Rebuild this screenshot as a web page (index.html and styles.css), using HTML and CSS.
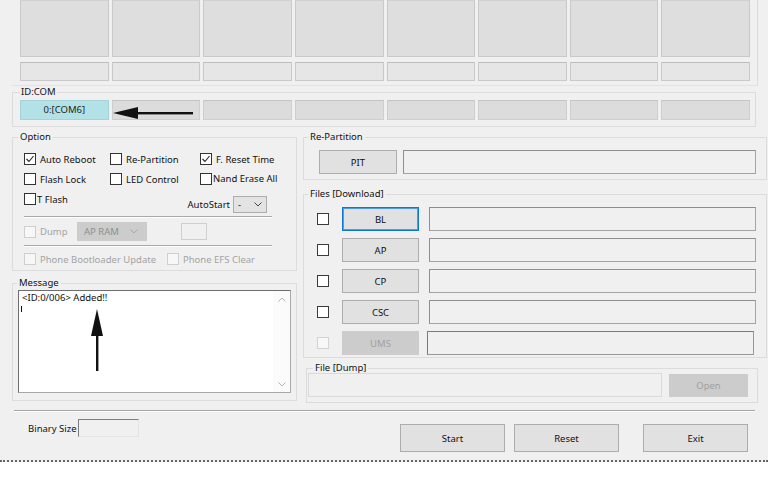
FILE: index.html
```html
<!DOCTYPE html>
<html>
<head>
<meta charset="utf-8">
<title>Odin</title>
<link rel="stylesheet" href="styles.css">
</head>
<body>
<div class="window">
  <div class="slots">
    <div class="grid8">
      <div class="cell big"></div><div class="cell big"></div><div class="cell big"></div><div class="cell big"></div>
      <div class="cell big"></div><div class="cell big"></div><div class="cell big"></div><div class="cell big"></div>
    </div>
    <div class="grid8 row2">
      <div class="cell small"></div><div class="cell small"></div><div class="cell small"></div><div class="cell small"></div>
      <div class="cell small"></div><div class="cell small"></div><div class="cell small"></div><div class="cell small"></div>
    </div>
  </div>

  <div class="group idcom">
    <div class="legend lg-idcom">ID:COM</div>
    <div class="grid8 com-row">
      <div class="com active">0:[COM6]</div><div class="com"></div><div class="com"></div><div class="com"></div>
      <div class="com"></div><div class="com"></div><div class="com"></div><div class="com"></div>
    </div>
  </div>

  <div class="main">
    <div class="left">
      <div class="group option">
        <div class="legend lg-left">Option</div>
        <div class="opt-body">
          <div class="row">
            <label class="chk c1"><span class="cb checked"><svg viewBox="0 0 10 10" width="10" height="10"><polyline points="1.5,5 4,7.5 8.5,2" /></svg></span><span>Auto Reboot</span></label>
            <label class="chk c2"><span class="cb"></span><span>Re-Partition</span></label>
            <label class="chk"><span class="cb checked"><svg viewBox="0 0 10 10" width="10" height="10"><polyline points="1.5,5 4,7.5 8.5,2" /></svg></span><span>F. Reset Time</span></label>
          </div>
          <div class="row">
            <label class="chk c1"><span class="cb"></span><span>Flash Lock</span></label>
            <label class="chk c2"><span class="cb"></span><span>LED Control</span></label>
            <label class="chk tight nand"><span class="cb"></span><span>Nand Erase All</span></label>
          </div>
          <div class="row row3">
            <label class="chk c1 tight tflash"><span class="cb"></span><span>T Flash</span></label>
            <div class="autostart">
              <span>AutoStart</span>
              <div class="select"><span>-</span><svg viewBox="0 0 8 5" width="8" height="5"><polyline points="0.5,0.5 4,4 7.5,0.5" /></svg></div>
            </div>
          </div>
          <div class="sep"></div>
          <div class="row dump-row">
            <label class="chk dis dumpchk"><span class="cb"></span><span>Dump</span></label>
            <div class="select dis-select"><span>AP RAM</span><svg viewBox="0 0 8 5" width="8" height="5"><polyline points="0.5,0.5 4,4 7.5,0.5" /></svg></div>
            <div class="dump-box"></div>
          </div>
          <div class="sep"></div>
          <div class="row phone-row">
            <label class="chk dis pbu"><span class="cb"></span><span>Phone Bootloader Update</span></label>
            <label class="chk dis"><span class="cb"></span><span>Phone EFS Clear</span></label>
          </div>
        </div>
      </div>

      <div class="group message">
        <div class="legend lg-msg">Message</div>
        <div class="msg">
          <div class="msg-text">
            <div class="line">&lt;ID:0/006&gt; Added!!</div>
            <div class="caret"></div>
          </div>
          <div class="scroll">
            <svg viewBox="0 0 8 5" width="8" height="5"><polyline points="0.5,4.5 4,1 7.5,4.5" /></svg>
            <svg viewBox="0 0 8 5" width="8" height="5"><polyline points="0.5,0.5 4,4 7.5,0.5" /></svg>
          </div>
        </div>
      </div>
    </div>

    <div class="right">
      <div class="group repart">
        <div class="legend lg-right">Re-Partition</div>
        <div class="rp-body">
          <button class="btn pit">PIT</button>
          <div class="field"></div>
        </div>
      </div>

      <div class="group files">
        <div class="legend lg-right">Files [Download]</div>
        <div class="files-body">
          <div class="frow"><span class="cb"></span><button class="btn fbtn focus">BL</button><div class="field"></div></div>
          <div class="frow"><span class="cb"></span><button class="btn fbtn">AP</button><div class="field"></div></div>
          <div class="frow"><span class="cb"></span><button class="btn fbtn">CP</button><div class="field"></div></div>
          <div class="frow"><span class="cb"></span><button class="btn fbtn">CSC</button><div class="field"></div></div>
          <div class="frow"><span class="cb dis-cb"></span><button class="btn fbtn disabled">UMS</button><div class="field ums"></div></div>
        </div>
      </div>

      <div class="group dumpg">
        <div class="legend lg-dump">File [Dump]</div>
        <div class="dump-body">
          <div class="field dis-field"></div>
          <button class="btn disabled open">Open</button>
        </div>
      </div>
    </div>
  </div>

  <div class="bottom-sep"></div>
  <div class="bottom-row">
    <div class="binary">
      <span>Binary Size</span>
      <div class="bin-field"></div>
    </div>
    <div class="actions">
      <button class="btn act">Start</button>
      <button class="btn act">Reset</button>
      <button class="btn act exit">Exit</button>
    </div>
  </div>

  <svg class="arrow arrow-com" width="90" height="20" viewBox="0 0 90 20">
    <polygon points="0,9 25,3 25,15" />
    <rect x="22" y="8" width="58" height="2.4" />
  </svg>
  <svg class="arrow arrow-msg" width="20" height="70" viewBox="0 0 20 70">
    <polygon points="10,0 4,27 16,27" />
    <rect x="9" y="24" width="2.4" height="38" />
  </svg>
</div>
</body>
</html>
```

FILE: styles.css
```css
* { box-sizing: border-box; }

body {
  margin: 0;
  background: #ffffff;
  font-family: "Noto Sans", "Liberation Sans", sans-serif;
  font-size: 9.5px;
  color: #111111;
}

.window {
  position: relative;
  width: 768px;
  height: 462px;
  background: #f0f0f0;
  border-bottom: 2px dotted #666666;
  overflow: hidden;
}

/* top slot area */
.slots {
  margin-left: 12px;
  width: 746px;
  border-right: 1px solid #dcdcdc;
  border-bottom: 1px solid #e2e2e2;
  padding: 0 7px 4px 8px;
}

.grid8 {
  display: grid;
  grid-template-columns: repeat(8, 1fr);
  gap: 3px;
}

.row2 { margin-top: 5px; }

.cell {
  border: 1px solid #c9c9c9;
  border-top-color: #bdbdbd;
  background: #dedede;
}
.cell.big { height: 57px; border-top-color: #d0d0d0; }
.cell.small { height: 19px; background: #e6e6e6; }

/* group boxes */
.group {
  border: 1px solid #dcdcdc;
}

.legend {
  display: block;
  width: max-content;
  height: 12px;
  line-height: 12px;
  margin-top: -7px;
  padding: 0 2px;
  background: #f0f0f0;
}

.lg-idcom { margin-left: 0; padding: 0 1px; }
.lg-left { margin-left: 5px; }
.lg-msg { margin-left: 4px; }
.lg-right { margin-left: 4px; }
.lg-dump { margin-left: 6px; }

.idcom {
  margin: 6px 0 0 12px;
  width: 744px;
  padding: 0 5px 6px 7px;
}

.com-row { margin-top: 2px; }

.com {
  height: 20px;
  background: #dcdcdc;
  border: 1px solid #cecece;
  border-top-color: #c4c4c4;
  text-align: center;
  line-height: 18px;
  color: #222;
}
.com.active {
  background: #b3e2e6;
  border-color: #a3d3d8;
}

/* main two-column area */
.main {
  display: flex;
  gap: 6px;
  margin: 10px 0 0 12px;
}

.left {
  width: 285px;
  display: flex;
  flex-direction: column;
  gap: 12px;
}

.right {
  width: 464px;
  display: flex;
  flex-direction: column;
}

/* option group */
.option { height: 134px; }

.opt-body { padding: 6px 0 0 11px; }

.row {
  display: flex;
  align-items: center;
  height: 20px;
}

.chk {
  display: flex;
  align-items: center;
  gap: 4px;
  white-space: nowrap;
}
.chk.tight { gap: 1px; }
.c1 { width: 86px; }
.c2 { width: 90px; }

.nand { margin-top: -1px; }

.cb {
  display: inline-flex;
  align-items: center;
  justify-content: center;
  width: 12px;
  height: 12px;
  flex: none;
  background: #ffffff;
  border: 1px solid #333333;
}
.cb svg polyline {
  fill: none;
  stroke: #222;
  stroke-width: 1.1;
}

.row3 {
  height: 24px;
  align-items: flex-start;
}
.row3 .tflash { height: 20px; }

.autostart {
  display: flex;
  align-items: center;
  gap: 3px;
  margin-left: auto;
  margin-right: 29px;
  align-self: flex-end;
}

.select {
  display: flex;
  align-items: center;
  justify-content: space-between;
  width: 34px;
  height: 17px;
  padding: 0 4px 0 4px;
  background: #e3e3e3;
  border: 1px solid #adadad;
}
.select svg polyline {
  fill: none;
  stroke: #444;
  stroke-width: 1;
}

.sep {
  width: 248px;
  height: 2px;
  margin-top: 3px;
  border-top: 1px solid #a9a9a9;
  border-bottom: 1px solid #ffffff;
}

.dump-row { height: 27px; }
.dump-row + .sep { margin-top: 0; }

.dis { color: #a3a3a3; }
.dis .cb, .dis-cb {
  border-color: #cfcfcf;
  background: #f7f7f7;
}
.dumpchk { width: 53px; }

.dis-select {
  width: 70px;
  height: 19px;
  padding: 0 8px 0 6px;
  background: #cccccc;
  border-color: #cccccc;
  color: #8f8f8f;
}
.dis-select svg polyline { stroke: #a8a8a8; }

.dump-box {
  width: 26px;
  height: 17px;
  margin-left: 34px;
  border: 1px solid #cfcfcf;
  background: #f0f0f0;
}

.phone-row { height: 24px; }
.pbu { width: 143px; }

/* message */
.message { height: 118px; }

.msg {
  display: flex;
  height: 103px;
  margin: 1px 5px 0 5px;
  background: #ffffff;
  border: 1px solid #a8a8a8;
  border-top-color: #6e6e6e;
  border-left-color: #6e6e6e;
}

.msg-text {
  flex: 1;
  padding: 0 3px;
}
.line {
  line-height: 12px;
  height: 12px;
  margin-top: 1px;
  white-space: nowrap;
}
.caret {
  width: 1px;
  height: 6px;
  margin: 2px 0 0 -1px;
  background: #111;
}

.scroll {
  width: 17px;
  display: flex;
  flex-direction: column;
  justify-content: space-between;
  align-items: center;
  padding: 6px 0 5px;
  background: #fbfbfb;
}
.scroll svg polyline {
  fill: none;
  stroke: #b5b5b5;
  stroke-width: 1;
}

/* buttons and fields */
.btn {
  font: inherit;
  color: #111111;
  background: #e1e1e1;
  border: 1px solid #adadad;
  padding: 0;
  margin: 0;
}
.btn.disabled {
  background: #cccccc;
  border-color: #cccccc;
  color: #a0a0a0;
}

.field {
  flex: 1;
  height: 24px;
  background: #f0f0f0;
  border: 1px solid #a4a4a4;
  border-top-color: #8e8e8e;
  border-left-color: #8e8e8e;
}

/* re-partition */
.repart { height: 43px; }
.rp-body {
  display: flex;
  gap: 6px;
  margin-top: 7px;
  padding: 0 10px 0 15px;
}
.pit { width: 78px; height: 24px; }

/* files */
.files { height: 164px; margin-top: 14px; }
.files-body {
  display: flex;
  flex-direction: column;
  gap: 7px;
  padding: 7px 10px 0 13px;
}
.frow {
  display: flex;
  align-items: center;
  height: 24px;
}
.frow .cb { border-color: #3a3a3a; }
.frow .cb.dis-cb { border-color: #d2d2d2; }
.fbtn {
  width: 77px;
  height: 24px;
  margin-left: 13px;
  margin-right: 10px;
}
.fbtn.focus {
  border-color: #0a78d4;
  box-shadow: inset 0 0 0 1px #4e9de0;
}
.field.ums { margin-right: 2px; margin-left: -2px; border-color: #7a7a7a; border-right-color: #999; border-bottom-color: #999; }

/* file dump */
.dumpg {
  width: 452px;
  height: 35px;
  margin: 10px 0 0 3px;
}
.dump-body {
  display: flex;
  align-items: flex-start;
  gap: 7px;
  margin-top: -1px;
  padding: 0 9px 0 1px;
}
.dis-field {
  border-color: #dadada;
  height: 24px;
}
.open {
  width: 79px;
  height: 23px;
  margin-top: 1px;
}

/* bottom */
.bottom-sep {
  width: 741px;
  height: 2px;
  margin: 7px 0 0 14px;
  border-top: 1px solid #a6a6a6;
  border-bottom: 1px solid #ffffff;
}

.bottom-row {
  display: flex;
  align-items: flex-start;
  padding-left: 28px;
}

.binary {
  display: flex;
  align-items: center;
  gap: 1px;
  margin-top: 7px;
  height: 18px;
}
.bin-field {
  width: 61px;
  height: 18px;
  background: #f0f0f0;
  border: 1px solid #e3e3e3;
  border-top-color: #7d7d7d;
  border-left-color: #7d7d7d;
}

.actions {
  display: flex;
  gap: 9px;
  margin: 12px 20px 0 auto;
}
.act { width: 105px; height: 28px; }
.exit { margin-left: 15px; }

/* annotation arrows */
.arrow {
  position: absolute;
  fill: #111111;
}
.arrow-com { left: 113px; top: 104px; }
.arrow-msg { left: 87px; top: 309px; }
```
